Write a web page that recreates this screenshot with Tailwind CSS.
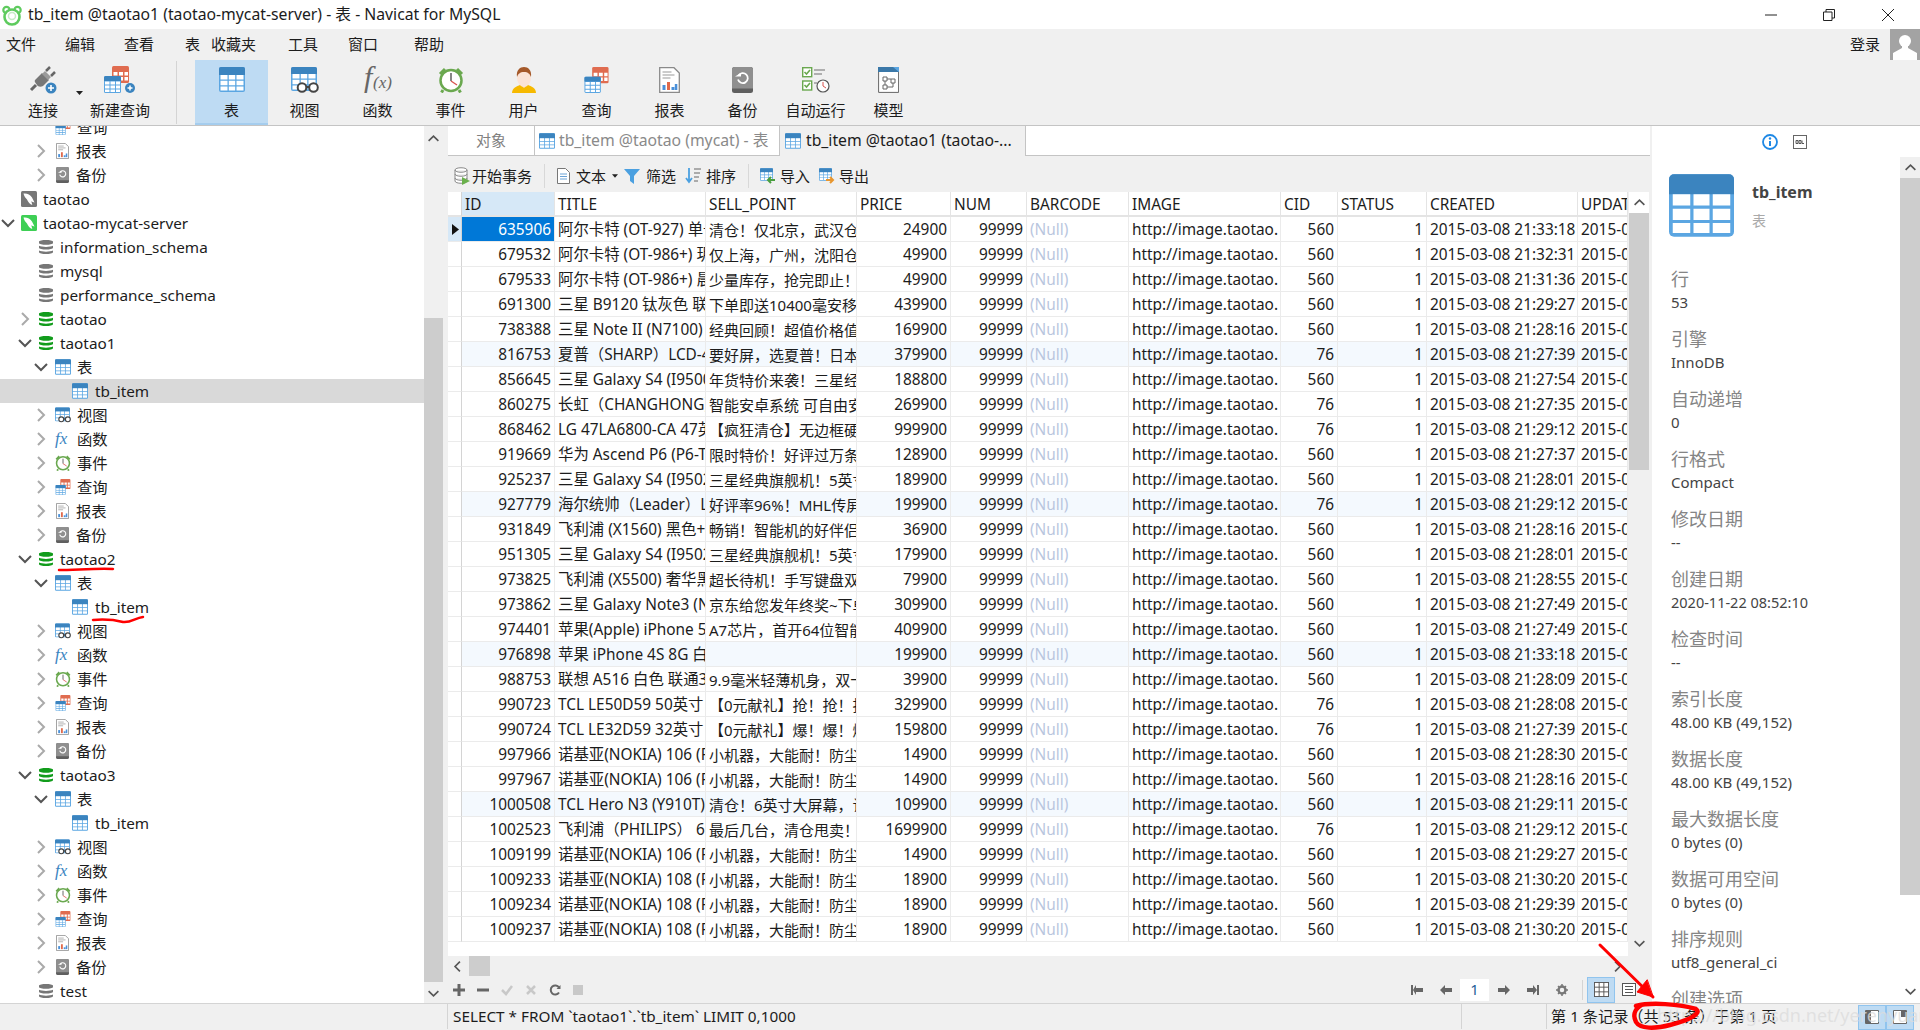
<!DOCTYPE html>
<html lang="zh-CN">
<head>
<meta charset="utf-8">
<title>Navicat</title>
<script src="https://cdn.jsdelivr.net/npm/@tailwindcss/browser@4"></script>
</head>
<body>
<svg class="hidden" width="0" height="0">
<defs>
<symbol id="cr" viewBox="0 0 16 16"><path d="M5 2 11 8 5 14" fill="none" stroke="#aaa" stroke-width="2"/></symbol>
<symbol id="cd" viewBox="0 0 16 16"><path d="M2 5 8 11 14 5" fill="none" stroke="#555" stroke-width="2"/></symbol>
<symbol id="conn" viewBox="0 0 16 16"><rect width="16" height="16" rx="1.5" fill="currentColor"/><path d="M2.500 2.500c3.500-.5 6.500 1 8.500 4l2.500 5c-1.200 0-2.300-.5-3.200-1.200l1 3.700c-2.300-.8-4.300-3-5.300-5.500C4.500 7 3 5 2.500 2.500z" fill="#fff"/></symbol>
<symbol id="db" viewBox="0 0 15 16"><path d="M0 2.500C0 0 15 0 15 2.500v1.200c0 2.500-15 2.500-15 0z M0 6.700c3 1.600 12 1.600 15 0v2.100c0 2.500-15 2.500-15 0z M0 11.800c3 1.600 12 1.600 15 0v1.500c0 3-15 3-15 0z" fill="currentColor"/></symbol>
<symbol id="t" viewBox="0 0 26 25"><rect width="26" height="25" rx="2" fill="#5ba6e2"/><path d="M0 8V2a2 2 0 0 1 2-2h22a2 2 0 0 1 2 2v6z" fill="#3b84bf"/><path d="M1.500 8h7v4.500h-7zM9.800 8h6.400v4.500H9.800zM17.500 8h7v4.500h-7zM1.500 13.800h7v4.500h-7zM9.800 13.800h6.400v4.500H9.800zM17.500 13.800h7v4.500h-7zM1.500 19.500h7v4h-7zM9.800 19.500h6.400v4H9.800zM17.500 19.500h7v4h-7z" fill="#fff"/></symbol>
<symbol id="v" viewBox="0 0 28 26"><rect x="0" width="26" height="24" rx="2" fill="#5ba6e2"/><path d="M0 7V2a2 2 0 0 1 2-2h22a2 2 0 0 1 2 2v5z" fill="#3b84bf"/><path d="M1.500 7h7v4.500h-7zM9.800 7h6.400v4.500H9.800zM17.500 7h7v4.500h-7zM1.500 12.800h7v4.500h-7zM9.800 12.800h6.400v4.500H9.800zM17.500 12.800h7v4.500h-7zM1.500 18.500h7v4h-7zM9.800 18.500h6.400v4H9.800zM17.500 18.500h7v4h-7z" fill="#fff"/><circle cx="11" cy="20.500" r="4.300" fill="#fff" stroke="#444" stroke-width="2"/><circle cx="22.500" cy="20.500" r="4.300" fill="#fff" stroke="#444" stroke-width="2"/><path d="M15 20h4" stroke="#444" stroke-width="2"/></symbol>
<symbol id="clk" viewBox="0 0 26 26"><path d="M2 7 7 2 M24 7 19 2 M5 23 3.500 25.500 M21 23 22.500 25.500" stroke="#6aa84f" stroke-width="3" fill="none"/><circle cx="13" cy="13.500" r="10.500" fill="#fff" stroke="#6aa84f" stroke-width="2.500"/><path d="M13 6v8" stroke="#444" stroke-width="1.300"/><path d="M13 14l6 4" stroke="#d9534f" stroke-width="1.300"/></symbol>
<symbol id="q" viewBox="0 0 25 27"><rect x="8" width="17" height="17" rx="1.500" fill="#e06c50"/><path d="M9.500 6h4v3.500h-4zM15 6h4v3.500h-4zM20.500 6h3.500v3.500h-3.500zM9.500 11h4v3.500h-4zM15 11h4v3.500h-4zM20.500 11h3.500v3.500h-3.500z" fill="#fff"/><rect y="10" width="17" height="17" rx="1.500" fill="#5ba6e2"/><path d="M0 15v-3.500a1.500 1.500 0 0 1 1.500-1.500h14a1.500 1.500 0 0 1 1.500 1.500V15z" fill="#3b84bf"/><path d="M1 15.500h4.500v3H1zM6.500 15.500h4.500v3H6.500zM12 15.500h4v3h-4zM1 19.500h4.500v3H1zM6.500 19.500h4.500v3H6.500zM12 19.500h4v3h-4zM1 23.500h4.500v2.500H1zM6.500 23.500h4.500v2.500H6.500zM12 23.500h4v2.500h-4z" fill="#fff"/></symbol>
<symbol id="rep" viewBox="0 0 21 26"><path d="M.7.700H15l5.300 5.300v19.300H.7z" fill="#fff" stroke="#8a8a8a" stroke-width="1.300"/><path d="M3.500 5h9M3.500 8h12M3.500 11h8" stroke="#9a9a9a" stroke-width="1.200"/><rect x="3.500" y="18" width="3" height="5" fill="#4a90d9"/><rect x="8" y="15" width="3" height="8" fill="#e0694a"/><rect x="12.500" y="20" width="3" height="3" fill="#4a90d9"/><rect x="15.800" y="17" width="2.500" height="6" fill="#4a90d9"/></symbol>
<symbol id="bak" viewBox="0 0 21 26"><rect width="21" height="26" rx="2.500" fill="#5f5f5f"/><path d="M0 21.500V2.500A2.500 2.500 0 0 1 2.500 0h16A2.500 2.500 0 0 1 21 2.500v19z" fill="#8f8f8f"/><path d="M6.500 8.500a5 5 0 1 1-.5 4" fill="none" stroke="#fff" stroke-width="1.800"/><path d="M3 9.500h6V6z" fill="#fff"/></symbol>
<symbol id="tbl" viewBox="0 0 16 16"><rect x=".5" y=".5" width="15" height="15" fill="#fff" stroke="#555"/><path d="M.5 5.500h15M.5 10.500h15M5.500.5v15M10.500.5v15" stroke="#555"/></symbol>
</defs>
</svg>

<div class="relative w-[1920px] h-[1030px] overflow-hidden flex flex-col bg-[#f0f0f0] text-[15px] text-[#1c1c1c] font-['Noto_Sans','Noto_Sans_CJK_SC',sans-serif]">

  <!-- title bar -->
  <div class="h-[29px] bg-white flex items-center shrink-0">
    <svg class="ml-[1px] w-[22px] h-[22px]" viewBox="0 0 22 22"><circle cx="5.500" cy="6" r="3.200" fill="#fff" stroke="#5ecb5e" stroke-width="2.200"/><circle cx="16.500" cy="6" r="3.200" fill="#fff" stroke="#5ecb5e" stroke-width="2.200"/><circle cx="11" cy="13" r="7.500" fill="#fff" stroke="#5ecb5e" stroke-width="2.600"/><circle cx="11" cy="12" r="3.500" fill="none" stroke="#c5ebc5" stroke-width="1.500"/></svg>
    <span class="ml-[5px] pt-[1px] text-[15.75px]">tb_item @taotao1 (taotao-mycat-server) - 表 - Navicat for MySQL</span>
    <div class="ml-auto flex items-center">
      <svg class="w-[12px] h-[12px]" viewBox="0 0 12 12"><path d="M0 6h12" stroke="#222"/></svg>
      <svg class="ml-[46px] w-[12px] h-[12px]" viewBox="0 0 12 12"><path d="M.5 3h8.500v8.500H.5zM3 3V.5h8.500V9H9" fill="none" stroke="#222"/></svg>
      <svg class="ml-[47px] mr-[26px] w-[12px] h-[12px]" viewBox="0 0 12 12"><path d="M0 0l12 12M12 0 0 12" stroke="#222"/></svg>
    </div>
  </div>

  <!-- menu -->
  <div class="h-[31px] flex items-center pl-[6px] shrink-0">
    <span>文件</span><span class="ml-[29px]">编辑</span><span class="ml-[29px]">查看</span><span class="ml-[31px]">表</span><span class="ml-[11px]">收藏夹</span><span class="ml-[32px]">工具</span><span class="ml-[30px]">窗口</span><span class="ml-[36px]">帮助</span>
    <span class="ml-auto mr-[10px]">登录</span>
    <div class="w-[30px] h-[31px] bg-[#a3a3a3] overflow-hidden">
      <svg viewBox="0 0 30 31" class="w-[30px] h-[31px]"><circle cx="15" cy="12" r="6" fill="#fff"/><path d="M12 16h6v3l9 5v7H3v-7l9-5z" fill="#fff"/></svg>
    </div>
  </div>

  <!-- toolbar -->
  <div class="h-[66px] shrink-0 border-b border-[#c4c4c4] flex items-stretch">
    <div class="relative ml-[6px] w-[74px] flex flex-col items-center pt-[6px]">
      <svg class="w-[28px] h-[28px]" viewBox="0 0 28 28"><path d="M2 24 7 19" stroke="#666" stroke-width="3"/><path d="M6 14l7-7 7 7-6 6c-2 1-5 1-6-1s-3-3-2-5z" fill="#777"/><path d="M13 8l3-3 6 6-3 3z" fill="#9a9a9a"/><path d="M17 5l4-4M22 10l4-4" stroke="#666" stroke-width="2.500"/><circle cx="22" cy="22" r="5.500" fill="#3b84bf"/><path d="M22 19v6M19 22h6" stroke="#fff" stroke-width="1.600"/></svg>
      <span class="mt-[6px] leading-[20px]">连接</span>
      <svg class="absolute -right-[3px] top-[31px] w-[7px] h-[4px]" viewBox="0 0 7 4"><path d="M0 0h7L3.500 4z" fill="#222"/></svg>
    </div>
    <div class="ml-[4px] w-[72px] flex flex-col items-center pt-[6px]">
      <svg class="w-[32px] h-[28px]" viewBox="0 0 32 28"><use href="#q" width="25" height="27"/><circle cx="26" cy="22" r="5" fill="#3b84bf"/><path d="M26 19.500v5M23.500 22h5" stroke="#fff" stroke-width="1.500"/></svg>
      <span class="mt-[6px] leading-[20px]">新建查询</span>
    </div>
    <div class="ml-[20px] my-[1px] w-px bg-[#d4d4d4]"></div>
    <div class="ml-[18px] w-[73px] bg-[#bedbf3] border-b-2 border-[#a5cdee] flex flex-col items-center pt-[7px]">
      <svg class="w-[26px] h-[25px]"><use href="#t"/></svg>
      <span class="mt-[8px] leading-[20px]">表</span>
    </div>
    <div class="w-[73px] flex flex-col items-center pt-[7px]"><svg class="w-[28px] h-[26px]"><use href="#v"/></svg><span class="mt-[7px] leading-[20px]">视图</span></div>
    <div class="w-[73px] flex flex-col items-center pt-[5px]"><svg class="w-[30px] h-[28px]" viewBox="0 0 30 28"><text x="1" y="22" font-family="Liberation Serif" font-style="italic" font-size="30" fill="#666">f</text><text x="10" y="23" font-family="Liberation Serif" font-style="italic" font-size="17" fill="#666">(x)</text></svg><span class="mt-[7px] leading-[20px]">函数</span></div>
    <div class="w-[73px] flex flex-col items-center pt-[7px]"><svg class="w-[26px] h-[26px]"><use href="#clk"/></svg><span class="mt-[7px] leading-[20px]">事件</span></div>
    <div class="w-[73px] flex flex-col items-center pt-[7px]"><svg class="w-[26px] h-[26px]" viewBox="0 0 26 26"><path d="M1 26c0-5 5-7 8-8h8c3 1 8 3 8 8z" fill="#f6b900"/><path d="M9 17h8l-4 4z" fill="#fbe3d6"/><ellipse cx="13" cy="11" rx="7" ry="9" fill="#fbe3d6"/><path d="M6 10C5 3 9 0 13 0s8 3 7 10c-1-3-3-5-7-5s-6 2-7 5z" fill="#a5592a"/></svg><span class="mt-[7px] leading-[20px]">用户</span></div>
    <div class="w-[73px] flex flex-col items-center pt-[7px]"><svg class="w-[25px] h-[26px]"><use href="#q"/></svg><span class="mt-[7px] leading-[20px]">查询</span></div>
    <div class="w-[73px] flex flex-col items-center pt-[7px]"><svg class="w-[21px] h-[26px]"><use href="#rep"/></svg><span class="mt-[7px] leading-[20px]">报表</span></div>
    <div class="w-[73px] flex flex-col items-center pt-[7px]"><svg class="w-[21px] h-[26px]"><use href="#bak"/></svg><span class="mt-[7px] leading-[20px]">备份</span></div>
    <div class="w-[73px] flex flex-col items-center pt-[7px] whitespace-nowrap"><svg class="w-[28px] h-[26px]" viewBox="0 0 28 26"><rect x=".7" y=".7" width="9" height="9" fill="#fff" stroke="#6aa84f" stroke-width="1.400"/><path d="M2.500 5l2 2 3.500-4" fill="none" stroke="#6aa84f" stroke-width="1.600"/><rect x=".7" y="14" width="9" height="9" fill="#fff" stroke="#6aa84f" stroke-width="1.400"/><path d="M2.500 18l2 2 3.500-4" fill="none" stroke="#6aa84f" stroke-width="1.600"/><path d="M12 3h11M12 7h8M12 16h3" stroke="#999" stroke-width="1.600"/><circle cx="21" cy="19" r="6" fill="#fff" stroke="#555" stroke-width="1.200"/><path d="M21 15v4l3 2" fill="none" stroke="#d9534f"/></svg><span class="mt-[7px] leading-[20px]">自动运行</span></div>
    <div class="w-[73px] flex flex-col items-center pt-[7px]"><svg class="w-[21px] h-[26px]" viewBox="0 0 21 26"><path d="M.6.600h20v24.800H.6z" fill="#fff" stroke="#666"/><path d="M0 0h16l5 4v1H0z" fill="#3b78a8"/><path d="M15 0h6v5z" fill="#5ba6e2"/><path d="M5 10h4v4H5zM5 18h4v4H5zM13 12h4v4h-4zM9 12h4M7 14v4M9 20h6v-4" fill="none" stroke="#666"/></svg><span class="mt-[7px] leading-[20px]">模型</span></div>
  </div>

  <!-- middle -->
  <div class="h-[877px] shrink-0 flex">

    <!-- tree -->
    <div class="w-[424px] bg-white overflow-hidden text-[15.3px]">
      <div class="-mt-[11px] [&>div]:h-6 [&>div]:flex [&>div]:items-center [&>div]:whitespace-nowrap [&_svg]:shrink-0">
        <div class="pl-[33px]"><span class="w-4"></span><svg class="ml-[6px] w-[16px] h-[16px]"><use href="#q"/></svg><span class="ml-[6px]">查询</span></div>
        <div class="pl-[33px]"><svg class="w-4 h-4"><use href="#cr"/></svg><svg class="ml-[7px] w-[13px] h-[16px]"><use href="#rep"/></svg><span class="ml-[7px]">报表</span></div>
        <div class="pl-[33px]"><svg class="w-4 h-4"><use href="#cr"/></svg><svg class="ml-[7px] w-[13px] h-[16px]"><use href="#bak"/></svg><span class="ml-[7px]">备份</span></div>
        <div class="pl-[21px]"><svg class="w-4 h-4 text-[#777]"><use href="#conn"/></svg><span class="ml-[6px]">taotao</span></div>
        <div><svg class="w-4 h-4"><use href="#cd"/></svg><svg class="ml-[5px] w-4 h-4 text-[#3ecf55]"><use href="#conn"/></svg><span class="ml-[6px]">taotao-mycat-server</span></div>
        <div class="pl-[39px]"><svg class="w-[14px] h-4 text-[#777]"><use href="#db"/></svg><span class="ml-[7px]">information_schema</span></div>
        <div class="pl-[39px]"><svg class="w-[14px] h-4 text-[#777]"><use href="#db"/></svg><span class="ml-[7px]">mysql</span></div>
        <div class="pl-[39px]"><svg class="w-[14px] h-4 text-[#777]"><use href="#db"/></svg><span class="ml-[7px]">performance_schema</span></div>
        <div class="pl-[17px]"><svg class="w-4 h-4"><use href="#cr"/></svg><svg class="ml-[6px] w-[14px] h-4 text-[#129c1c]"><use href="#db"/></svg><span class="ml-[7px]">taotao</span></div>
        <div class="pl-[17px]"><svg class="w-4 h-4"><use href="#cd"/></svg><svg class="ml-[6px] w-[14px] h-4 text-[#129c1c]"><use href="#db"/></svg><span class="ml-[7px]">taotao1</span></div>
        <div class="pl-[33px]"><svg class="w-4 h-4"><use href="#cd"/></svg><svg class="ml-[6px] w-4 h-4"><use href="#t"/></svg><span class="ml-[6px]">表</span></div>
        <div class="pl-[72px] bg-[#d9d9d9]"><svg class="w-4 h-4"><use href="#t"/></svg><span class="ml-[7px]">tb_item</span></div>
        <div class="pl-[33px]"><svg class="w-4 h-4"><use href="#cr"/></svg><svg class="ml-[6px] w-4 h-4"><use href="#v"/></svg><span class="ml-[6px]">视图</span></div>
        <div class="pl-[33px]"><svg class="w-4 h-4"><use href="#cr"/></svg><span class="ml-[6px] w-4 font-['Liberation_Serif'] italic text-[#3b84bf] text-[17px] leading-4">fx</span><span class="ml-[6px]">函数</span></div>
        <div class="pl-[33px]"><svg class="w-4 h-4"><use href="#cr"/></svg><svg class="ml-[6px] w-4 h-4"><use href="#clk"/></svg><span class="ml-[6px]">事件</span></div>
        <div class="pl-[33px]"><svg class="w-4 h-4"><use href="#cr"/></svg><svg class="ml-[6px] w-4 h-4"><use href="#q"/></svg><span class="ml-[6px]">查询</span></div>
        <div class="pl-[33px]"><svg class="w-4 h-4"><use href="#cr"/></svg><svg class="ml-[7px] w-[13px] h-[16px]"><use href="#rep"/></svg><span class="ml-[7px]">报表</span></div>
        <div class="pl-[33px]"><svg class="w-4 h-4"><use href="#cr"/></svg><svg class="ml-[7px] w-[13px] h-[16px]"><use href="#bak"/></svg><span class="ml-[7px]">备份</span></div>
        <div class="pl-[17px]"><svg class="w-4 h-4"><use href="#cd"/></svg><svg class="ml-[6px] w-[14px] h-4 text-[#129c1c]"><use href="#db"/></svg><span class="ml-[7px]">taotao2</span></div>
        <div class="pl-[33px]"><svg class="w-4 h-4"><use href="#cd"/></svg><svg class="ml-[6px] w-4 h-4"><use href="#t"/></svg><span class="ml-[6px]">表</span></div>
        <div class="pl-[72px]"><svg class="w-4 h-4"><use href="#t"/></svg><span class="ml-[7px]">tb_item</span></div>
        <div class="pl-[33px]"><svg class="w-4 h-4"><use href="#cr"/></svg><svg class="ml-[6px] w-4 h-4"><use href="#v"/></svg><span class="ml-[6px]">视图</span></div>
        <div class="pl-[33px]"><svg class="w-4 h-4"><use href="#cr"/></svg><span class="ml-[6px] w-4 font-['Liberation_Serif'] italic text-[#3b84bf] text-[17px] leading-4">fx</span><span class="ml-[6px]">函数</span></div>
        <div class="pl-[33px]"><svg class="w-4 h-4"><use href="#cr"/></svg><svg class="ml-[6px] w-4 h-4"><use href="#clk"/></svg><span class="ml-[6px]">事件</span></div>
        <div class="pl-[33px]"><svg class="w-4 h-4"><use href="#cr"/></svg><svg class="ml-[6px] w-4 h-4"><use href="#q"/></svg><span class="ml-[6px]">查询</span></div>
        <div class="pl-[33px]"><svg class="w-4 h-4"><use href="#cr"/></svg><svg class="ml-[7px] w-[13px] h-[16px]"><use href="#rep"/></svg><span class="ml-[7px]">报表</span></div>
        <div class="pl-[33px]"><svg class="w-4 h-4"><use href="#cr"/></svg><svg class="ml-[7px] w-[13px] h-[16px]"><use href="#bak"/></svg><span class="ml-[7px]">备份</span></div>
        <div class="pl-[17px]"><svg class="w-4 h-4"><use href="#cd"/></svg><svg class="ml-[6px] w-[14px] h-4 text-[#129c1c]"><use href="#db"/></svg><span class="ml-[7px]">taotao3</span></div>
        <div class="pl-[33px]"><svg class="w-4 h-4"><use href="#cd"/></svg><svg class="ml-[6px] w-4 h-4"><use href="#t"/></svg><span class="ml-[6px]">表</span></div>
        <div class="pl-[72px]"><svg class="w-4 h-4"><use href="#t"/></svg><span class="ml-[7px]">tb_item</span></div>
        <div class="pl-[33px]"><svg class="w-4 h-4"><use href="#cr"/></svg><svg class="ml-[6px] w-4 h-4"><use href="#v"/></svg><span class="ml-[6px]">视图</span></div>
        <div class="pl-[33px]"><svg class="w-4 h-4"><use href="#cr"/></svg><span class="ml-[6px] w-4 font-['Liberation_Serif'] italic text-[#3b84bf] text-[17px] leading-4">fx</span><span class="ml-[6px]">函数</span></div>
        <div class="pl-[33px]"><svg class="w-4 h-4"><use href="#cr"/></svg><svg class="ml-[6px] w-4 h-4"><use href="#clk"/></svg><span class="ml-[6px]">事件</span></div>
        <div class="pl-[33px]"><svg class="w-4 h-4"><use href="#cr"/></svg><svg class="ml-[6px] w-4 h-4"><use href="#q"/></svg><span class="ml-[6px]">查询</span></div>
        <div class="pl-[33px]"><svg class="w-4 h-4"><use href="#cr"/></svg><svg class="ml-[7px] w-[13px] h-[16px]"><use href="#rep"/></svg><span class="ml-[7px]">报表</span></div>
        <div class="pl-[33px]"><svg class="w-4 h-4"><use href="#cr"/></svg><svg class="ml-[7px] w-[13px] h-[16px]"><use href="#bak"/></svg><span class="ml-[7px]">备份</span></div>
        <div class="pl-[39px]"><svg class="w-[14px] h-4 text-[#777]"><use href="#db"/></svg><span class="ml-[7px]">test</span></div>
      </div>
    </div>

    <!-- tree scrollbar -->
    <div class="w-[24px] flex flex-col items-start">
      <svg class="mt-[6px] ml-[3px] w-[13px] h-[13px]" viewBox="0 0 16 16"><path d="M2 11 8 5 14 11" fill="none" stroke="#555" stroke-width="2"/></svg>
      <div class="mt-[173px] w-[19px] h-[664px] bg-[#cdcdcd]"></div>
      <svg class="mt-[5px] ml-[3px] w-[13px] h-[13px]" viewBox="0 0 16 16"><path d="M2 5 8 11 14 5" fill="none" stroke="#555" stroke-width="2"/></svg>
    </div>

    <!-- main -->
    <div class="w-[1202px] flex flex-col">
      <!-- tabs -->
      <div class="h-[30px] bg-white border-b border-[#c4c4c4] flex items-stretch shrink-0 whitespace-nowrap">
        <div class="w-[87px] flex items-center justify-center text-[#808080] border-r border-[#c4c4c4]">对象</div>
        <div class="w-[245px] flex items-center pl-[4px] text-[#8a8a8a] border-r border-[#c4c4c4] text-[15.75px]"><svg class="w-4 h-4"><use href="#t"/></svg><span class="ml-[4px]">tb_item @taotao (mycat) - 表</span></div>
        <div class="w-[246px] -mb-px bg-[#f0f0f0] flex items-center pl-[5px] border-r border-[#c4c4c4] text-[15.75px]"><svg class="w-4 h-4"><use href="#t"/></svg><span class="ml-[5px]">tb_item @taotao1 (taotao-...</span></div>
      </div>
      <!-- data toolbar -->
      <div class="h-[36px] flex items-center shrink-0 whitespace-nowrap pt-[4px]">
        <svg class="ml-[6px] w-[16px] h-[18px]" viewBox="0 0 16 18"><path d="M1 3c0-3 12-3 12 0v11c0 3-12 3-12 0z M1 3c0 3 12 3 12 0M1 7c0 3 12 3 12 0M1 11c0 3 12 3 12 0" fill="#fff" stroke="#888"/><path d="M8 10l8 4-8 4z" fill="#6ab04c"/></svg>
        <span class="ml-[2px]">开始事务</span>
        <div class="ml-[12px] w-px h-[24px] bg-[#d8d8d8]"></div>
        <svg class="ml-[12px] w-[13px] h-[16px]" viewBox="0 0 13 16"><path d="M.5.500h8l4 4v11H.5z" fill="#fff" stroke="#777"/><path d="M3 6h7M3 8.500h7M3 11h7" stroke="#6ba3d6"/></svg>
        <span class="ml-[6px]">文本</span>
        <svg class="ml-[6px] w-[6px] h-[4px]" viewBox="0 0 7 4"><path d="M0 0h7L3.500 4z" fill="#222"/></svg>
        <svg class="ml-[6px] w-[16px] h-[16px]" viewBox="0 0 16 16"><path d="M0 1h16L10 8v8L6 13V8z" fill="#4ba0e0"/></svg>
        <span class="ml-[6px]">筛选</span>
        <svg class="ml-[9px] w-[16px] h-[16px]" viewBox="0 0 16 16"><path d="M4 0v13M1 10l3 4 3-4" fill="none" stroke="#4ba0e0" stroke-width="1.800"/><path d="M9 1h7M9 5h6M9 9h5M9 13h4" stroke="#666"/></svg>
        <span class="ml-[5px]">排序</span>
        <div class="ml-[12px] w-px h-[24px] bg-[#d8d8d8]"></div>
        <svg class="ml-[11px] w-[16px] h-[16px]" viewBox="0 0 16 16"><use href="#t" width="13" height="13"/><path d="M15 12H8m3-3-3 3 3 3" fill="none" stroke="#4a9e3f" stroke-width="2"/></svg>
        <span class="ml-[4px]">导入</span>
        <svg class="ml-[9px] w-[16px] h-[16px]" viewBox="0 0 16 16"><use href="#t" width="13" height="13"/><path d="M7 12h7m-3-3 3 3-3 3" fill="none" stroke="#e8962e" stroke-width="2"/></svg>
        <span class="ml-[4px]">导出</span>
      </div>
      <!-- grid -->
      <div class="h-[764px] flex shrink-0">
        <div class="w-[1180px] bg-white overflow-hidden">
          <table class="table-fixed w-[1180px] text-[15.4px] border-separate border-spacing-0 [&_th]:h-[25px] [&_th]:pt-[3px] [&_th]:leading-[20px] [&_th]:font-normal [&_th]:text-left [&_th]:px-[3px] [&_th]:border-r [&_th]:border-b-2 [&_th]:border-[#e4e4e4] [&_th]:overflow-hidden [&_th]:whitespace-nowrap [&_td]:h-[25px] [&_td]:pt-[1px] [&_td]:leading-[20px] [&_td]:px-[3px] [&_td]:border-r [&_td]:border-b [&_td]:border-[#ebebeb] [&_td]:overflow-hidden [&_td]:whitespace-nowrap [&_td:nth-child(2)]:text-right [&_td:nth-child(4)]:text-[15px] [&_td:nth-child(5)]:text-right [&_td:nth-child(6)]:text-right [&_td:nth-child(9)]:text-right [&_td:nth-child(10)]:text-right [&_td:nth-child(7)]:text-[#b9c6de] [&_td:first-child]:border-r-[#d4d4d4] [&_th:first-child]:border-r-[#d4d4d4]">
            <colgroup><col class="w-[14px]"><col class="w-[93px]"><col class="w-[151px]"><col class="w-[151px]"><col class="w-[94px]"><col class="w-[76px]"><col class="w-[102px]"><col class="w-[152px]"><col class="w-[57px]"><col class="w-[89px]"><col class="w-[151px]"><col class="w-[50px]"></colgroup>
            <thead><tr><th></th><th class="bg-[#d6e8f7]">ID</th><th>TITLE</th><th>SELL_POINT</th><th>PRICE</th><th>NUM</th><th>BARCODE</th><th>IMAGE</th><th>CID</th><th>STATUS</th><th>CREATED</th><th>UPDATED</th></tr></thead>
            <tbody>
              <tr><td class="bg-[#d6e8f7] !p-0"><svg class="ml-[4px] w-[7px] h-[11px]" viewBox="0 0 7 11"><path d="M0 0l7 5.500L0 11z" fill="#111"/></svg></td><td class="bg-[#0078d7] text-white">635906</td><td>阿尔卡特 (OT-927) 单卡单待</td><td>清仓！仅北京，武汉仓有货</td><td>24900</td><td>99999</td><td>(Null)</td><td>http://image.taotao.</td><td>560</td><td>1</td><td>2015-03-08 21:33:18</td><td>2015-03-08</td></tr>
              <tr><td></td><td>679532</td><td>阿尔卡特 (OT-986+) 玥白</td><td>仅上海，广州，沈阳仓有货</td><td>49900</td><td>99999</td><td>(Null)</td><td>http://image.taotao.</td><td>560</td><td>1</td><td>2015-03-08 21:32:31</td><td>2015-03-08</td></tr>
              <tr><td></td><td>679533</td><td>阿尔卡特 (OT-986+) 晨曦</td><td>少量库存，抢完即止！</td><td>49900</td><td>99999</td><td>(Null)</td><td>http://image.taotao.</td><td>560</td><td>1</td><td>2015-03-08 21:31:36</td><td>2015-03-08</td></tr>
              <tr><td></td><td>691300</td><td>三星 B9120 钛灰色 联通</td><td>下单即送10400毫安移动电源</td><td>439900</td><td>99999</td><td>(Null)</td><td>http://image.taotao.</td><td>560</td><td>1</td><td>2015-03-08 21:29:27</td><td>2015-03-08</td></tr>
              <tr><td></td><td>738388</td><td>三星 Note II (N7100) 云石</td><td>经典回顾！超值价格值得</td><td>169900</td><td>99999</td><td>(Null)</td><td>http://image.taotao.</td><td>560</td><td>1</td><td>2015-03-08 21:28:16</td><td>2015-03-08</td></tr>
              <tr class="bg-[#f4f9fe]"><td class="bg-white"></td><td>816753</td><td>夏普（SHARP）LCD-46</td><td>要好屏，选夏普！日本原装</td><td>379900</td><td>99999</td><td>(Null)</td><td>http://image.taotao.</td><td>76</td><td>1</td><td>2015-03-08 21:27:39</td><td>2015-03-08</td></tr>
              <tr><td></td><td>856645</td><td>三星 Galaxy S4 (I9500)</td><td>年货特价来袭！三星经典</td><td>188800</td><td>99999</td><td>(Null)</td><td>http://image.taotao.</td><td>560</td><td>1</td><td>2015-03-08 21:27:54</td><td>2015-03-08</td></tr>
              <tr><td></td><td>860275</td><td>长虹（CHANGHONG）3D</td><td>智能安卓系统 可自由安装</td><td>269900</td><td>99999</td><td>(Null)</td><td>http://image.taotao.</td><td>76</td><td>1</td><td>2015-03-08 21:27:35</td><td>2015-03-08</td></tr>
              <tr><td></td><td>868462</td><td>LG 47LA6800-CA 47英寸</td><td>【疯狂清仓】无边框硬屏</td><td>999900</td><td>99999</td><td>(Null)</td><td>http://image.taotao.</td><td>76</td><td>1</td><td>2015-03-08 21:29:12</td><td>2015-03-08</td></tr>
              <tr><td></td><td>919669</td><td>华为 Ascend P6 (P6-T00)</td><td>限时特价！好评过万条</td><td>128900</td><td>99999</td><td>(Null)</td><td>http://image.taotao.</td><td>560</td><td>1</td><td>2015-03-08 21:27:37</td><td>2015-03-08</td></tr>
              <tr><td></td><td>925237</td><td>三星 Galaxy S4 (I9502)</td><td>三星经典旗舰机！5英寸</td><td>189900</td><td>99999</td><td>(Null)</td><td>http://image.taotao.</td><td>560</td><td>1</td><td>2015-03-08 21:28:01</td><td>2015-03-08</td></tr>
              <tr class="bg-[#f4f9fe]"><td class="bg-white"></td><td>927779</td><td>海尔统帅（Leader）LE32</td><td>好评率96%！MHL传屏</td><td>199900</td><td>99999</td><td>(Null)</td><td>http://image.taotao.</td><td>76</td><td>1</td><td>2015-03-08 21:29:12</td><td>2015-03-08</td></tr>
              <tr><td></td><td>931849</td><td>飞利浦 (X1560) 黑色+白</td><td>畅销！智能机的好伴侣</td><td>36900</td><td>99999</td><td>(Null)</td><td>http://image.taotao.</td><td>560</td><td>1</td><td>2015-03-08 21:28:16</td><td>2015-03-08</td></tr>
              <tr><td></td><td>951305</td><td>三星 Galaxy S4 (I9502)</td><td>三星经典旗舰机！5英寸</td><td>179900</td><td>99999</td><td>(Null)</td><td>http://image.taotao.</td><td>560</td><td>1</td><td>2015-03-08 21:28:01</td><td>2015-03-08</td></tr>
              <tr><td></td><td>973825</td><td>飞利浦 (X5500) 奢华黑</td><td>超长待机！手写键盘双卡</td><td>79900</td><td>99999</td><td>(Null)</td><td>http://image.taotao.</td><td>560</td><td>1</td><td>2015-03-08 21:28:55</td><td>2015-03-08</td></tr>
              <tr><td></td><td>973862</td><td>三星 Galaxy Note3 (N9008)</td><td>京东给您发年终奖~下单</td><td>309900</td><td>99999</td><td>(Null)</td><td>http://image.taotao.</td><td>560</td><td>1</td><td>2015-03-08 21:27:49</td><td>2015-03-08</td></tr>
              <tr><td></td><td>974401</td><td>苹果(Apple) iPhone 5s</td><td>A7芯片，首开64位智能机</td><td>409900</td><td>99999</td><td>(Null)</td><td>http://image.taotao.</td><td>560</td><td>1</td><td>2015-03-08 21:27:49</td><td>2015-03-08</td></tr>
              <tr class="bg-[#f4f9fe]"><td class="bg-white"></td><td>976898</td><td>苹果 iPhone 4S 8G 白色版</td><td></td><td>199900</td><td>99999</td><td>(Null)</td><td>http://image.taotao.</td><td>560</td><td>1</td><td>2015-03-08 21:33:18</td><td>2015-03-08</td></tr>
              <tr><td></td><td>988753</td><td>联想 A516 白色 联通3G</td><td>9.9毫米轻薄机身，双卡双</td><td>39900</td><td>99999</td><td>(Null)</td><td>http://image.taotao.</td><td>560</td><td>1</td><td>2015-03-08 21:28:09</td><td>2015-03-08</td></tr>
              <tr><td></td><td>990723</td><td>TCL LE50D59 50英寸 液晶</td><td>【0元献礼】抢！抢！抢</td><td>329900</td><td>99999</td><td>(Null)</td><td>http://image.taotao.</td><td>76</td><td>1</td><td>2015-03-08 21:28:08</td><td>2015-03-08</td></tr>
              <tr><td></td><td>990724</td><td>TCL LE32D59 32英寸 液晶</td><td>【0元献礼】爆！爆！爆</td><td>159800</td><td>99999</td><td>(Null)</td><td>http://image.taotao.</td><td>76</td><td>1</td><td>2015-03-08 21:27:39</td><td>2015-03-08</td></tr>
              <tr><td></td><td>997966</td><td>诺基亚(NOKIA) 106 (RM-962)</td><td>小机器，大能耐！防尘防水</td><td>14900</td><td>99999</td><td>(Null)</td><td>http://image.taotao.</td><td>560</td><td>1</td><td>2015-03-08 21:28:30</td><td>2015-03-08</td></tr>
              <tr><td></td><td>997967</td><td>诺基亚(NOKIA) 106 (RM-962)</td><td>小机器，大能耐！防尘防水</td><td>14900</td><td>99999</td><td>(Null)</td><td>http://image.taotao.</td><td>560</td><td>1</td><td>2015-03-08 21:28:16</td><td>2015-03-08</td></tr>
              <tr class="bg-[#f4f9fe]"><td class="bg-white"></td><td>1000508</td><td>TCL Hero N3 (Y910T)</td><td>清仓！6英寸大屏幕，让</td><td>109900</td><td>99999</td><td>(Null)</td><td>http://image.taotao.</td><td>560</td><td>1</td><td>2015-03-08 21:29:11</td><td>2015-03-08</td></tr>
              <tr><td></td><td>1002523</td><td>飞利浦（PHILIPS） 65英寸</td><td>最后几台，清仓甩卖！</td><td>1699900</td><td>99999</td><td>(Null)</td><td>http://image.taotao.</td><td>76</td><td>1</td><td>2015-03-08 21:29:12</td><td>2015-03-08</td></tr>
              <tr><td></td><td>1009199</td><td>诺基亚(NOKIA) 106 (RM-962)</td><td>小机器，大能耐！防尘防水</td><td>14900</td><td>99999</td><td>(Null)</td><td>http://image.taotao.</td><td>560</td><td>1</td><td>2015-03-08 21:29:27</td><td>2015-03-08</td></tr>
              <tr><td></td><td>1009233</td><td>诺基亚(NOKIA) 108 (RM-944)</td><td>小机器，大能耐！防尘防水</td><td>18900</td><td>99999</td><td>(Null)</td><td>http://image.taotao.</td><td>560</td><td>1</td><td>2015-03-08 21:30:20</td><td>2015-03-08</td></tr>
              <tr><td></td><td>1009234</td><td>诺基亚(NOKIA) 108 (RM-944)</td><td>小机器，大能耐！防尘防水</td><td>18900</td><td>99999</td><td>(Null)</td><td>http://image.taotao.</td><td>560</td><td>1</td><td>2015-03-08 21:29:39</td><td>2015-03-08</td></tr>
              <tr><td></td><td>1009237</td><td>诺基亚(NOKIA) 108 (RM-944)</td><td>小机器，大能耐！防尘防水</td><td>18900</td><td>99999</td><td>(Null)</td><td>http://image.taotao.</td><td>560</td><td>1</td><td>2015-03-08 21:30:20</td><td>2015-03-08</td></tr>
            </tbody>
          </table>
        </div>
        <!-- vertical scrollbar -->
        <div class="w-[22px] flex flex-col pl-px">
          <div class="h-[21px] w-[20px] bg-white flex items-center justify-center"><svg class="w-[13px] h-[13px]" viewBox="0 0 16 16"><path d="M2 11 8 5 14 11" fill="none" stroke="#555" stroke-width="2"/></svg></div>
          <div class="h-[257px] w-[20px] bg-[#cdcdcd]"></div>
          <svg class="mt-[467px] ml-[4px] w-[13px] h-[13px]" viewBox="0 0 16 16"><path d="M2 5 8 11 14 5" fill="none" stroke="#555" stroke-width="2"/></svg>
        </div>
      </div>
      <!-- h scrollbar -->
      <div class="h-[20px] flex items-center shrink-0">
        <svg class="ml-[3px] w-[13px] h-[13px]" viewBox="0 0 16 16"><path d="M11 2 5 8 11 14" fill="none" stroke="#555" stroke-width="2"/></svg>
        <div class="ml-[5px] w-[21px] h-[20px] bg-[#cdcdcd]"></div>
        <svg class="ml-auto mr-[26px] w-[13px] h-[13px]" viewBox="0 0 16 16"><path d="M5 2 11 8 5 14" fill="none" stroke="#555" stroke-width="2"/></svg>
      </div>
      <!-- bottom bar -->
      <div class="h-[27px] flex items-center shrink-0">
        <svg class="ml-[5px] w-[12px] h-[12px]" viewBox="0 0 12 12"><path d="M6 0v12M0 6h12" stroke="#666" stroke-width="3"/></svg>
        <svg class="ml-[12px] w-[12px] h-[12px]" viewBox="0 0 12 12"><path d="M0 6h12" stroke="#666" stroke-width="3"/></svg>
        <svg class="ml-[12px] w-[12px] h-[12px]" viewBox="0 0 12 12"><path d="M1 6l4 4 6-8" fill="none" stroke="#c8c8c8" stroke-width="2.500"/></svg>
        <svg class="ml-[12px] w-[12px] h-[12px]" viewBox="0 0 12 12"><path d="M2 2l8 8M10 2l-8 8" stroke="#c8c8c8" stroke-width="2.500"/></svg>
        <svg class="ml-[12px] w-[12px] h-[12px]" viewBox="0 0 12 12"><path d="M10 3.500A4.500 4.500 0 1 0 10 8.500" fill="none" stroke="#666" stroke-width="2"/><path d="M11.500 1v4h-4z" fill="#666"/></svg>
        <div class="ml-[12px] w-[10px] h-[10px] bg-[#c8c8c8]"></div>
        <svg class="ml-auto w-[12px] h-[10px]" viewBox="0 0 12 10"><path d="M1 0v10" stroke="#666" stroke-width="2"/><path d="M5 0v3h7v4H5v3L2 5z" fill="#666"/></svg>
        <svg class="ml-[17px] w-[12px] h-[10px]" viewBox="0 0 12 10"><path d="M5 0v3h7v4H5v3L0 5z" fill="#666"/></svg>
        <div class="ml-[8px] w-[29px] h-[22px] bg-white flex items-center justify-center text-[#1f5f99] leading-none">1</div>
        <svg class="ml-[9px] w-[12px] h-[10px]" viewBox="0 0 12 10"><path d="M7 0v3H0v4h7v3l5-5z" fill="#666"/></svg>
        <svg class="ml-[17px] w-[12px] h-[10px]" viewBox="0 0 12 10"><path d="M6 0v3H0v4h6v3l4-5z" fill="#666"/><path d="M11 0v10" stroke="#666" stroke-width="2"/></svg>
        <svg class="ml-[17px] w-[12px] h-[12px]" viewBox="0 0 12 12"><circle cx="6" cy="6" r="3.500" fill="none" stroke="#777" stroke-width="2.500"/><path d="M6 0v2M6 10v2M0 6h2M10 6h2M2 2l1.300 1.300M8.700 8.700 10 10M10 2 8.700 3.300M3.300 8.700 2 10" stroke="#777" stroke-width="1.500"/></svg>
        <div class="ml-[14px] w-px h-[20px] bg-[#d4d4d4]"></div>
        <div class="ml-[4px] w-[28px] h-[26px] bg-[#bedbf3] border border-[#90c4ee] flex items-center justify-center"><svg class="w-[15px] h-[15px]"><use href="#tbl"/></svg></div>
        <svg class="ml-[7px] mr-[14px] w-[14px] h-[13px]" viewBox="0 0 14 13"><rect x=".5" y=".5" width="13" height="12" fill="#fff" stroke="#555"/><path d="M3 3.500h8M3 6.500h8M3 9.500h8" stroke="#555"/></svg>
      </div>
    </div>

    <!-- right panel -->
    <div class="ml-[2px] w-[268px] bg-white flex">
      <div class="w-[248px] overflow-hidden">
        <div class="h-[31px] flex items-center">
          <svg class="ml-[110px] w-[16px] h-[16px]" viewBox="0 0 16 16"><circle cx="8" cy="8" r="7" fill="#fff" stroke="#1e88e5" stroke-width="1.800"/><path d="M8 7v5" stroke="#1e88e5" stroke-width="2"/><circle cx="8" cy="4.500" r="1.200" fill="#1e88e5"/></svg>
          <svg class="ml-[15px] w-[14px] h-[14px]" viewBox="0 0 14 14"><rect x=".5" y=".5" width="13" height="13" fill="#fff" stroke="#666"/><path d="M3 5.500h2v3H3zM6 5.500h2v3H6zM9 5.500v3h2" fill="none" stroke="#555"/></svg>
        </div>
        <div class="mt-[17px] flex items-start">
          <svg class="ml-[17px] w-[65px] h-[63px]"><use href="#t"/></svg>
          <div class="ml-[18px]">
            <div class="text-[16px] font-bold leading-[36px] text-[#444]">tb_item</div>
            <div class="text-[14px] leading-[22px] text-[#aaa]">表</div>
          </div>
        </div>
        <div class="mt-[29px] pl-[19px] whitespace-nowrap [&>div]:h-[60px] [&_p:first-child]:text-[18px] [&_p:first-child]:leading-[27px] [&_p:first-child]:text-[#858585] [&_p:last-child]:leading-[19px] [&_p:last-child]:text-[#444]">
          <div><p>行</p><p>53</p></div>
          <div><p>引擎</p><p>InnoDB</p></div>
          <div><p>自动递增</p><p>0</p></div>
          <div><p>行格式</p><p>Compact</p></div>
          <div><p>修改日期</p><p>--</p></div>
          <div><p>创建日期</p><p class="text-[14.5px]">2020-11-22 08:52:10</p></div>
          <div><p>检查时间</p><p>--</p></div>
          <div><p>索引长度</p><p>48.00 KB (49,152)</p></div>
          <div><p>数据长度</p><p>48.00 KB (49,152)</p></div>
          <div><p>最大数据长度</p><p>0 bytes (0)</p></div>
          <div><p>数据可用空间</p><p>0 bytes (0)</p></div>
          <div><p>排序规则</p><p>utf8_general_ci</p></div>
          <div><p>创建选项</p><p></p></div>
        </div>
      </div>
      <div class="w-[20px] flex flex-col pt-[31px]">
        <div class="h-[21px] bg-[#f0f0f0] flex items-center justify-center"><svg class="w-[13px] h-[13px]" viewBox="0 0 16 16"><path d="M2 11 8 5 14 11" fill="none" stroke="#555" stroke-width="2"/></svg></div>
        <div class="h-[717px] bg-[#cdcdcd]"></div>
        <div class="mt-[90px] flex justify-center"><svg class="w-[13px] h-[13px]" viewBox="0 0 16 16"><path d="M2 5 8 11 14 5" fill="none" stroke="#555" stroke-width="2"/></svg></div>
      </div>
    </div>
  </div>

  <!-- status bar -->
  <div class="h-[27px] shrink-0 border-t border-[#d4d4d4] flex items-center whitespace-nowrap pb-[2px]">
    <div class="ml-[447px] w-px h-[26px] bg-[#d4d4d4]"></div>
    <span class="ml-[5px] w-[1008px] text-[15.3px]">SELECT * FROM `taotao1`.`tb_item` LIMIT 0,1000</span>
    <div class="w-px h-[26px] bg-[#d4d4d4]"></div>
    <div class="ml-[84px] w-px h-[26px] bg-[#d4d4d4]"></div>
    <span class="ml-[4px] text-[15.2px]">第 1 条记录（共 53 条）于第 1 页</span>
    <div class="ml-auto mt-[2px] w-[28px] h-[25px] bg-[#bedbf3] border border-[#90c4ee] flex items-center justify-center"><svg class="w-[14px] h-[14px]" viewBox="0 0 14 14"><path d="M.5.500h13v13H.5z" fill="#fff" stroke="#666"/><path d="M1 1h5v12H1z" fill="#666"/></svg></div>
    <div class="mr-[6px] mt-[2px] w-[28px] h-[25px] bg-[#bedbf3] border border-[#90c4ee] flex items-center justify-center"><svg class="w-[14px] h-[14px]" viewBox="0 0 14 14"><path d="M.5.500h13v13H.5z" fill="#fff" stroke="#666"/><path d="M8 1h5v6H8z" fill="#666"/></svg></div>
  </div>

  <!-- watermark -->
  <span class="absolute left-[1657px] top-[1003px] text-[18px] leading-[24px] text-[#dcdcdc]/80 whitespace-nowrap">https://blog.csdn.net/yerenyuan_pku</span>

  <!-- red annotations -->
  <svg class="absolute inset-0 w-[1920px] h-[1030px] pointer-events-none" viewBox="0 0 1920 1030" fill="none" stroke="#f00" stroke-linecap="round" stroke-linejoin="round">
    <path d="M59 570c15 0 40-2 54-1" stroke-width="2.500"/>
    <path d="M93 620c12-1 22 0 30 2 8 1 12-4 20-5" stroke-width="2.500"/>
    <path d="M1600 945 1653 997" stroke-width="3"/>
    <path d="M1653 997 1637 992 1647 980z" fill="#f00" stroke-width="1"/>
    <path d="M1636 1006C1650 1002 1680 1004 1696 1009 1702 1013 1690 1020 1670 1025 1655 1029 1640 1029 1636 1022 1633 1016 1634 1010 1640 1006" stroke-width="4.500"/>
  </svg>
</div>
</body>
</html>
